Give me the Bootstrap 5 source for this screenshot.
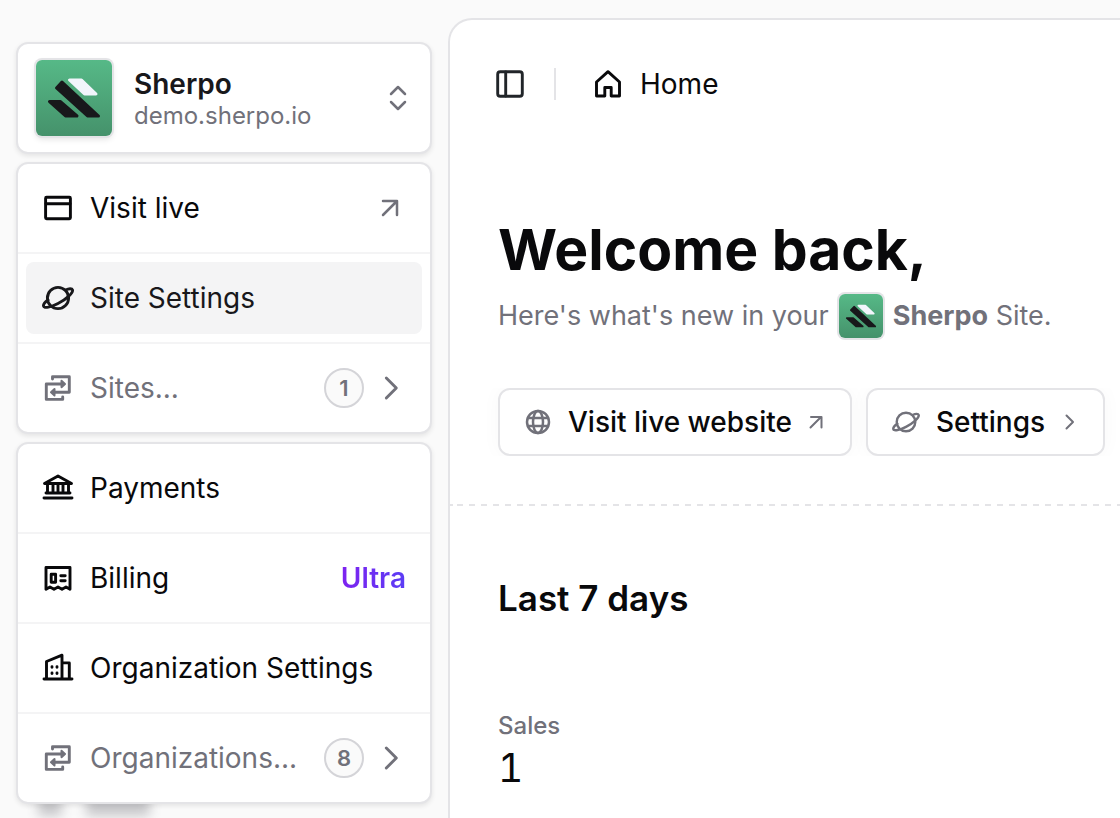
<!DOCTYPE html>
<html lang="en">
<head>
<meta charset="utf-8">
<meta name="viewport" content="width=device-width, initial-scale=1">
<title>Sherpo – Home</title>
<link href="https://cdn.jsdelivr.net/npm/bootstrap@5.3.0/dist/css/bootstrap.min.css" rel="stylesheet">
<style>
  :root { --ink: #09090b; --muted: #71717a; --line: #e4e4e7; }
  body { font-family: Inter, "Liberation Sans", sans-serif; font-size: 28px; line-height: 40px; color: var(--ink); background: #fafafa; }
  svg { display: block; flex: none; fill: none; stroke: currentColor; stroke-linecap: round; stroke-linejoin: round; }
  .ico { width: 32px; height: 32px; stroke-width: 2.9; }
  .ico-btn { width: 28px; height: 28px; stroke-width: 2.5; }
  .ico-end { width: 20px; height: 20px; stroke-width: 2; margin-left: -2px; }
  .ico-thin { stroke-width: 2.5; }
  .text-mute { color: var(--muted); }
  .sidebar { width: 448px; padding: 42px 16px 0; gap: 8px; }
  .panel { background: #fff; border: 2px solid var(--line); border-radius: 12px; box-shadow: 0 2px 5px rgba(0,0,0,.09); position: relative; z-index: 1; }
  .switcher { padding: 16px 16px 16px 18px; gap: 22px; color: #18181b; text-align: left; width: 100%; }
  .switcher strong, .switcher small { display: block; line-height: 32px; }
  .switcher strong { font-weight: 600; }
  .switcher small { font-size: 24px; }
  .logo-tile { width: 76px; height: 76px; border-radius: 6px; background: linear-gradient(#56b987, #45926b); box-shadow: 0 0 0 2px var(--line), 0 3px 6px rgba(0,0,0,.12); flex: none; }
  .logo-tile svg { width: 100%; height: 100%; stroke-width: 3; }
  .logo-tile.mini { width: 44px; height: 44px; box-shadow: 0 0 0 2px var(--line); }
  .menu li { padding: 8px; }
  .menu li + li { border-top: 2px solid #f4f4f5; }
  .menu a { height: 72px; padding: 0 16px; gap: 16px; border-radius: 8px; color: var(--ink); text-decoration: none; }
  .menu a.text-mute { color: var(--muted); }
  .menu a.active, .menu a:hover { background: #f4f4f5; color: #18181b; }
  .tail { gap: 10px; }
  .count { width: 40px; height: 40px; border: 2px solid #d4d4d8; border-radius: 50%; background: #fafafa; font-size: 22px; font-weight: 600; line-height: 36px; text-align: center; }
  .plan { font-weight: 600; background: linear-gradient(90deg, #7e22f0, #5b3df5); -webkit-background-clip: text; background-clip: text; color: transparent; }
  .ghost { gap: 24px; padding: 0 22px; margin-top: -16px; filter: blur(6px); opacity: .3; }
  .ghost span { height: 20px; width: 24px; background: #52525b; }
  .ghost span + span { width: 64px; }
  .content { margin-top: 18px; background: #fff; border: solid var(--line); border-width: 2px 0 0 2px; border-top-left-radius: 24px; min-width: 0; }
  .topbar { height: 128px; padding: 0 44px; }
  .topbar .rule { width: 2px; height: 32px; background: var(--line); margin: 0 36px 0 28px; }
  .hero { padding: 66px 0 48px 48px; }
  h1 { font-size: 57px; line-height: 72px; font-weight: 700; margin: 0; }
  .lede { height: 60px; gap: 10px; color: var(--muted); font-size: 27px; }
  .lede b { font-weight: 700; }
  .actions { gap: 14px; margin-top: 42px; }
  .btn-site { height: 68px; padding: 0 24px; gap: 16px; background: #fff; border: 2px solid var(--line); border-radius: 12px; color: var(--ink); font-size: 28px; font-weight: 500; line-height: 40px; white-space: nowrap; box-shadow: 0 0 20px rgba(0,0,0,.03); clip-path: inset(0 -16px); }
  .dashes { height: 2px; background: repeating-linear-gradient(90deg, var(--line) 0 6px, transparent 6px 12px) 7px 0; }
  .stats { padding: 68px 48px 16px; }
  h2 { font-size: 35px; line-height: 48px; font-weight: 600; margin: 0 0 88px; }
  dt { font-size: 24px; line-height: 32px; font-weight: 500; color: var(--muted); }
  dd { font-size: 39px; line-height: 52px; font-variant-numeric: tabular-nums; }
</style>
</head>
<body>
<svg width="0" height="0" class="position-absolute" aria-hidden="true">
  <symbol id="mark" viewBox="0 0 76 76">
    <path d="M33.500 20h12L60 34H48.500z" fill="#f1f5fb" stroke="#f1f5fb"/>
    <path d="M26 22l-5.500 6L51.500 56H62.500z M13.500 41.600h11L41 56H29.500z" fill="#18181b" stroke="#18181b"/>
  </symbol>
  <symbol id="planet" viewBox="0 0 32 32">
    <circle cx="16" cy="16" r="10.600"/>
    <path d="M23.500 8c3.500-1.700 6.500-1.800 7 0 .8 3-6.500 9.500-14.500 13.500-7 3.700-14 5.300-14.500 2.500-.3-1.500 1.500-3.800 4.500-6"/>
  </symbol>
  <symbol id="swap" viewBox="0 0 32 32">
    <path d="M10.500 7V4.700h16.800v15.600H12M20 12H4.300v15.400h16.400V25"/>
    <path d="M19.500 8.800l3.500 3.200-3.500 3.200zM12.500 17.100L9 20.300l3.500 3.200z" fill="currentColor" stroke-width="2"/>
  </symbol>
  <symbol id="chev" viewBox="0 0 32 32"><path d="M12.300 6l10 10-10 10"/></symbol>
</svg>

<div class="d-flex min-vh-100 overflow-hidden">
  <aside class="sidebar d-flex flex-column flex-shrink-0">
    <button type="button" class="panel switcher d-flex align-items-center">
      <span class="logo-tile"><svg aria-hidden="true"><use href="#mark"/></svg></span>
      <span class="flex-grow-1 pt-1"><strong>Sherpo</strong><small class="text-mute">demo.sherpo.io</small></span>
      <svg class="ico ico-thin text-mute" viewBox="0 0 32 32"><path d="M9 12l7-7 7 7M9 20l7 7 7-7"/></svg>
    </button>

    <ul class="panel menu list-unstyled mb-0">
      <li><a href="#" class="d-flex align-items-center">
        <svg class="ico" viewBox="0 0 32 32"><rect x="3.600" y="5.300" width="24.800" height="21.400" rx="1"/><path d="M4 11.700h24"/></svg>
        <span class="flex-grow-1">Visit live</span>
        <svg class="ico ico-thin text-mute" viewBox="0 0 32 32"><path d="M9 9h14v14M23 9L9 23"/></svg></a></li>
      <li><a href="#" class="d-flex align-items-center active">
        <svg class="ico"><use href="#planet"/></svg><span>Site Settings</span></a></li>
      <li><a href="#" class="d-flex align-items-center text-mute">
        <svg class="ico"><use href="#swap"/></svg><span class="flex-grow-1">Sites...</span>
        <span class="tail d-flex align-items-center"><span class="count">1</span><svg class="ico"><use href="#chev"/></svg></span></a></li>
    </ul>

    <ul class="panel menu list-unstyled mb-0">
      <li><a href="#" class="d-flex align-items-center">
        <svg class="ico" viewBox="0 0 32 32"><path d="M2.500 11.500L16 4l13.500 7.500zM5.500 12v9M11 12v9M16 12v9M21 12v9M26.500 12v9M4 21h24M2 26h28"/></svg>
        <span>Payments</span></a></li>
      <li><a href="#" class="d-flex align-items-center">
        <svg class="ico" viewBox="0 0 32 32"><path d="M4 27.200V5.500h24v21.700l-4-2.200-4 2.200-4-2.200-4 2.200-4-2.200z"/><path d="M9.200 12.200h4.400v8H9.200zM18.800 13.700h4.400M18.800 18.700h4.400"/></svg>
        <span class="flex-grow-1">Billing</span><span class="plan">Ultra</span></a></li>
      <li><a href="#" class="d-flex align-items-center">
        <svg class="ico" viewBox="0 0 32 32"><path d="M2 27h28M4.500 27V9.500L20 3.200V27M20 10.900h7.300V27"/><path d="M10 14.700v.6M15 14.700v.6M10 21v.6M15 21v.6"/></svg>
        <span>Organization Settings</span></a></li>
      <li><a href="#" class="d-flex align-items-center text-mute">
        <svg class="ico"><use href="#swap"/></svg><span class="flex-grow-1">Organizations...</span>
        <span class="tail d-flex align-items-center"><span class="count">8</span><svg class="ico"><use href="#chev"/></svg></span></a></li>
    </ul>
    <div class="ghost d-flex" aria-hidden="true"><span></span><span></span></div>
  </aside>

  <main class="content flex-grow-1">
    <header class="topbar d-flex align-items-center">
      <button type="button" class="btn p-0 border-0" aria-label="Toggle sidebar">
        <svg class="ico" viewBox="0 0 32 32"><rect x="3.700" y="3.700" width="24.600" height="24.600" rx="2.500"/><path d="M11.700 4v24"/></svg>
      </button>
      <span class="rule"></span>
      <span class="d-flex align-items-center gap-3">
        <svg class="ico" viewBox="0 0 32 32"><path d="M16 3.700L4.500 14v14h8.300v-8.500h6.400V28h8.300V14z"/></svg>
        <span>Home</span>
      </span>
    </header>

    <section class="hero">
      <h1>Welcome back,</h1>
      <div class="lede d-flex align-items-center">
        <span>Here's what's new in your</span>
        <span class="logo-tile mini"><svg aria-hidden="true"><use href="#mark"/></svg></span>
        <span><b>Sherpo</b> Site.</span>
      </div>
      <div class="actions d-flex">
        <button type="button" class="btn btn-site d-flex align-items-center">
          <svg class="ico-btn text-mute" viewBox="0 0 28 28"><circle cx="14" cy="14" r="11"/><ellipse cx="14" cy="14" rx="5" ry="11"/><path d="M4 10h20M4 18h20"/></svg>
          Visit live website
          <svg class="ico-end text-mute" viewBox="0 0 20 20"><path d="M5 5h10.500v10.500M15 5L4.500 15.500"/></svg>
        </button>
        <button type="button" class="btn btn-site d-flex align-items-center">
          <svg class="ico-btn text-mute"><use href="#planet" stroke-width="2.800"/></svg>
          Settings
          <svg class="ico-end text-mute" viewBox="0 0 20 20"><path d="M7.500 3.500L14 10l-6.500 6.500"/></svg>
        </button>
      </div>
    </section>

    <div class="dashes"></div>

    <section class="stats">
      <h2>Last 7 days</h2>
      <dl class="mb-0"><dt>Sales</dt><dd class="mb-0">1</dd></dl>
    </section>
  </main>
</div>
<script src="https://cdn.jsdelivr.net/npm/bootstrap@5.3.0/dist/js/bootstrap.bundle.min.js"></script>
</body>
</html>
